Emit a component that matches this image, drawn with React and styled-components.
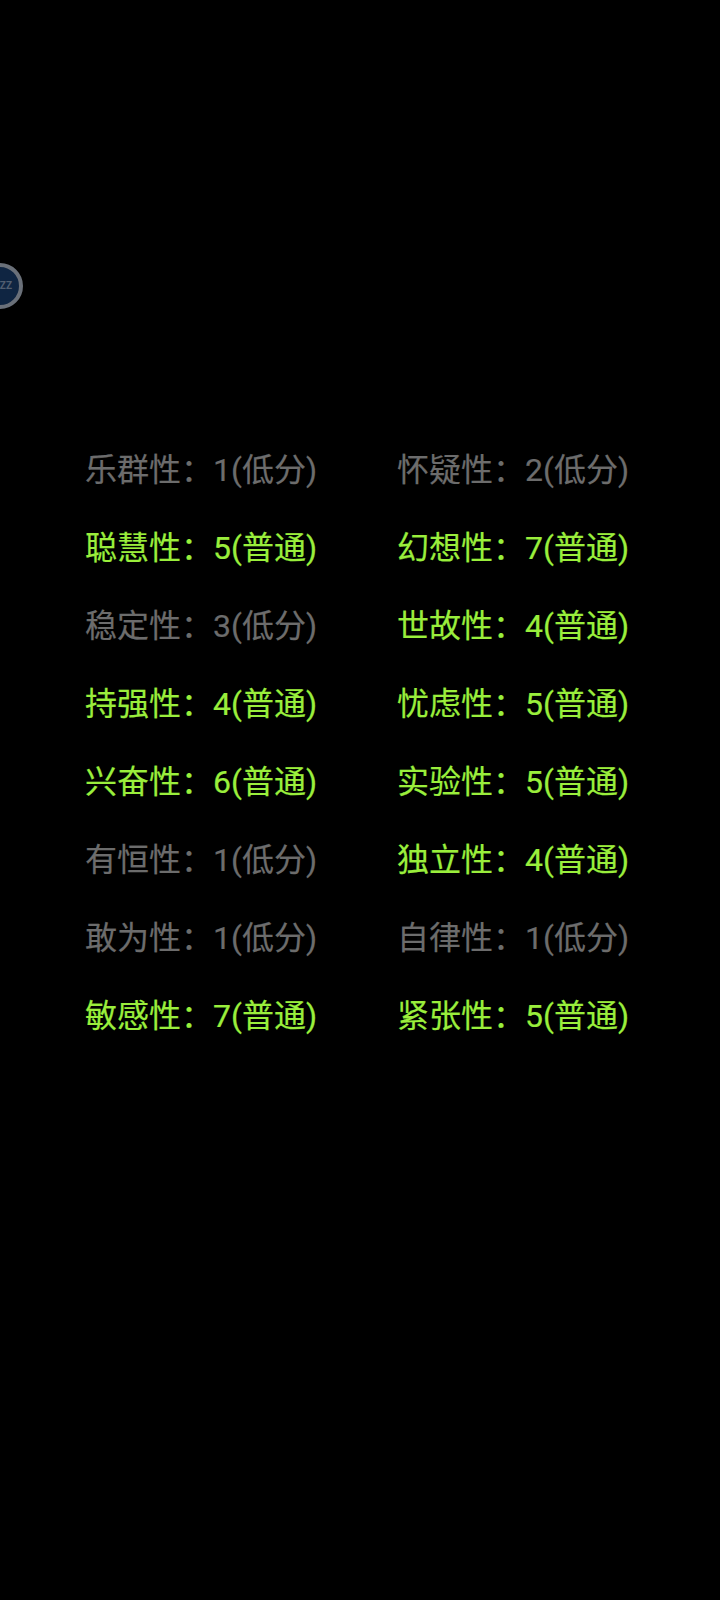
import React from "react";
import styled, { createGlobalStyle } from "styled-components";

const GlobalStyle = createGlobalStyle`
  html, body {
    margin: 0;
    background: #000;
  }
`;

const Page = styled.div`
  position: relative;
  width: 720px;
  height: 1600px;
  overflow: hidden;
  background: #000;
  padding: 431px 0 0 85px;
  box-sizing: border-box;
  font-family: "Roboto", "Noto Sans CJK SC", sans-serif;
`;

const Floating = styled.div`
  position: absolute;
  left: -23px;
  top: 263px;
  width: 46px;
  height: 46px;
  box-sizing: border-box;
  border: 4px solid #6a7079;
  border-radius: 50%;
  background: #0f2542;
  color: #515e70;
  font-size: 10px;
  font-weight: 700;
  line-height: 38px;
  text-align: right;
  padding-right: 7px;
`;

const Grid = styled.div`
  display: grid;
  grid-template-columns: 312px 312px;
  grid-auto-rows: 78px;
`;

const Trait = styled.div`
  font-size: 32px;
  line-height: 78px;
  white-space: nowrap;
  -webkit-text-stroke: 0.2px currentColor;
  color: ${(props) => (props.$low ? "#6c6c6c" : "#9aee3c")};
`;

const traits = [
  ["乐群性", 1, "低分"],
  ["怀疑性", 2, "低分"],
  ["聪慧性", 5, "普通"],
  ["幻想性", 7, "普通"],
  ["稳定性", 3, "低分"],
  ["世故性", 4, "普通"],
  ["持强性", 4, "普通"],
  ["忧虑性", 5, "普通"],
  ["兴奋性", 6, "普通"],
  ["实验性", 5, "普通"],
  ["有恒性", 1, "低分"],
  ["独立性", 4, "普通"],
  ["敢为性", 1, "低分"],
  ["自律性", 1, "低分"],
  ["敏感性", 7, "普通"],
  ["紧张性", 5, "普通"],
];

export default function App() {
  return (
    <Page>
      <GlobalStyle />
      <Floating>ZZ</Floating>
      <Grid>
        {traits.map(([name, score, level]) => (
          <Trait key={name} $low={level === "低分"}>
            {name}：{score}({level})
          </Trait>
        ))}
      </Grid>
    </Page>
  );
}
